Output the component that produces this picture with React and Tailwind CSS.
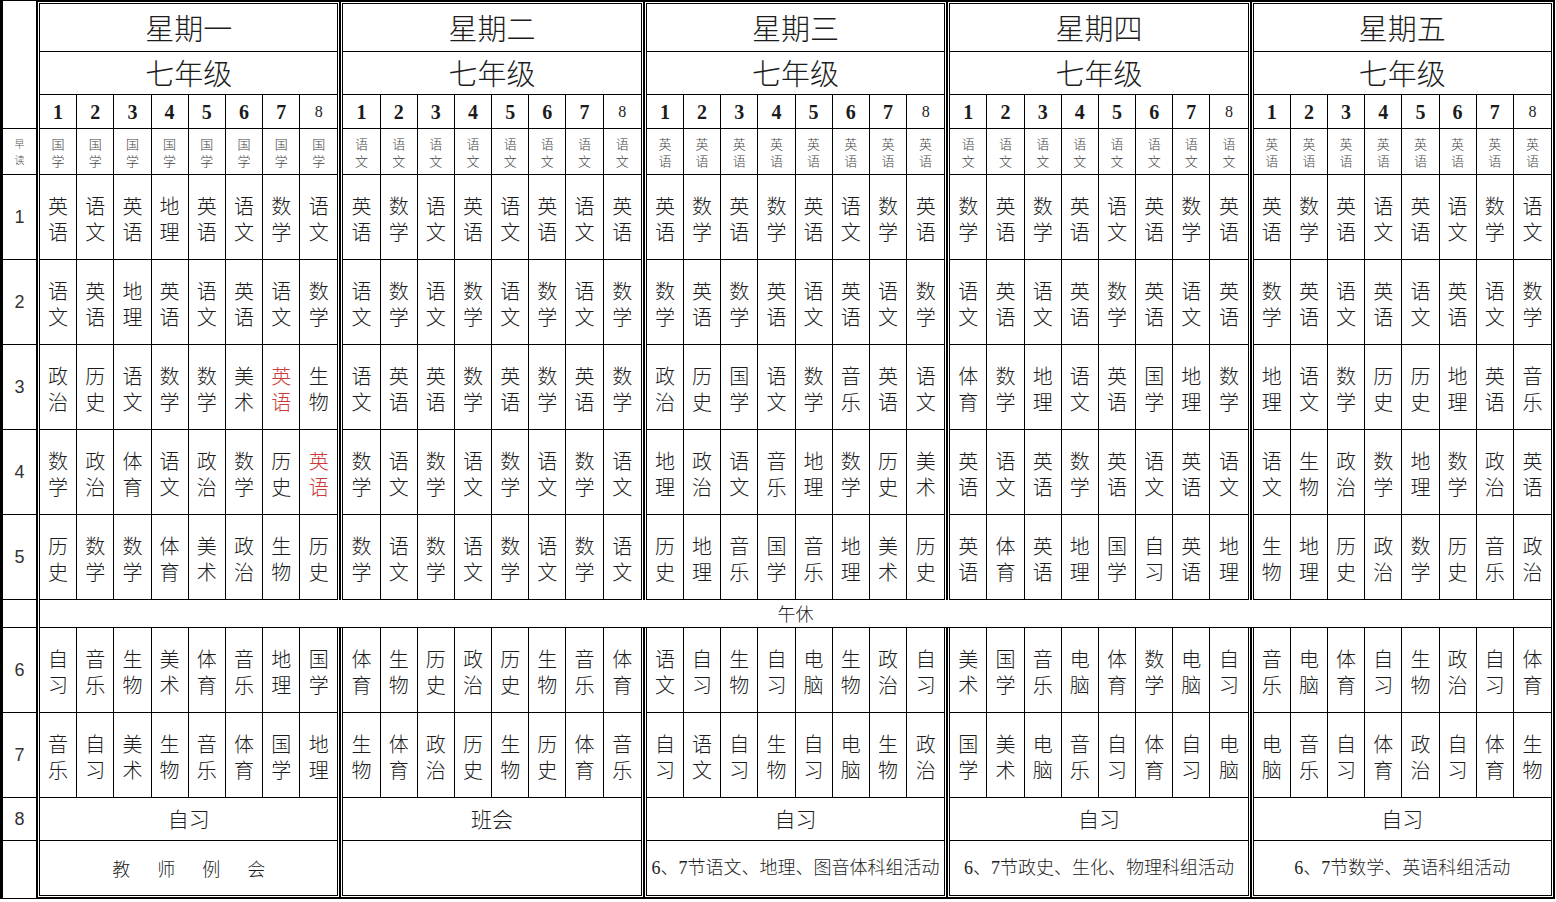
import React from 'react';

const days = ['星期一', '星期二', '星期三', '星期四', '星期五'];
const early = ['国学', '语文', '英语', '语文', '英语'];

// each period: 5 days, 8 classes; a leading * marks red text
const morning = [
  [
    '英语 语文 英语 地理 英语 语文 数学 语文',
    '英语 数学 语文 英语 语文 英语 语文 英语',
    '英语 数学 英语 数学 英语 语文 数学 英语',
    '数学 英语 数学 英语 语文 英语 数学 英语',
    '英语 数学 英语 语文 英语 语文 数学 语文',
  ],
  [
    '语文 英语 地理 英语 语文 英语 语文 数学',
    '语文 数学 语文 数学 语文 数学 语文 数学',
    '数学 英语 数学 英语 语文 英语 语文 数学',
    '语文 英语 语文 英语 数学 英语 语文 英语',
    '数学 英语 语文 英语 语文 英语 语文 数学',
  ],
  [
    '政治 历史 语文 数学 数学 美术 *英语 生物',
    '语文 英语 英语 数学 英语 数学 英语 数学',
    '政治 历史 国学 语文 数学 音乐 英语 语文',
    '体育 数学 地理 语文 英语 国学 地理 数学',
    '地理 语文 数学 历史 历史 地理 英语 音乐',
  ],
  [
    '数学 政治 体育 语文 政治 数学 历史 *英语',
    '数学 语文 数学 语文 数学 语文 数学 语文',
    '地理 政治 语文 音乐 地理 数学 历史 美术',
    '英语 语文 英语 数学 英语 语文 英语 语文',
    '语文 生物 政治 数学 地理 数学 政治 英语',
  ],
  [
    '历史 数学 数学 体育 美术 政治 生物 历史',
    '数学 语文 数学 语文 数学 语文 数学 语文',
    '历史 地理 音乐 国学 音乐 地理 美术 历史',
    '英语 体育 英语 地理 国学 自习 英语 地理',
    '生物 地理 历史 政治 数学 历史 音乐 政治',
  ],
];

const afternoon = [
  [
    '自习 音乐 生物 美术 体育 音乐 地理 国学',
    '体育 生物 历史 政治 历史 生物 音乐 体育',
    '语文 自习 生物 自习 电脑 生物 政治 自习',
    '美术 国学 音乐 电脑 体育 数学 电脑 自习',
    '音乐 电脑 体育 自习 生物 政治 自习 体育',
  ],
  [
    '音乐 自习 美术 生物 音乐 体育 国学 地理',
    '生物 体育 政治 历史 生物 历史 体育 音乐',
    '自习 语文 自习 生物 自习 电脑 生物 政治',
    '国学 美术 电脑 音乐 自习 体育 自习 电脑',
    '电脑 音乐 自习 体育 政治 自习 体育 生物',
  ],
];

const eighth = ['自习', '班会', '自习', '自习', '自习'];
const notes = [
  null,
  '',
  '6、7节语文、地理、图音体科组活动',
  '6、7节政史、生化、物理科组活动',
  '6、7节数学、英语科组活动',
];

const Subject = ({ name, small }) => {
  const red = name.startsWith('*');
  const text = red ? name.slice(1) : name;
  return (
    <div
      className={`flex flex-col items-center justify-center ${
        small ? 'text-[13px] leading-[17px] text-[#444]' : 'text-[20px] leading-[26px] pt-[3px]'
      } ${red ? 'text-[#cc3a3a]' : ''}`}
    >
      {text.split('').map((c, i) => (
        <span key={i}>{c}</span>
      ))}
    </div>
  );
};

const ClassRow = ({ list, h, small }) => (
  <div className={`${h} border-b border-black grid grid-cols-8`}>
    {list.map((s, i) => (
      <div key={i} className={`flex items-center justify-center ${i < 7 ? 'border-r border-black' : ''}`}>
        <Subject name={s} small={small} />
      </div>
    ))}
  </div>
);

const LeftNum = ({ n, h }) => (
  <div className={`${h} border-b border-black flex items-center justify-center font-['Liberation_Sans',sans-serif] text-[18px] text-[#333] font-light`}>
    {n}
  </div>
);

export default function App() {
  return (
    <div className="w-[1556px] h-[902px] bg-white text-[#1c1c1c] font-['Noto_Sans_CJK_SC',sans-serif] font-light overflow-hidden">
      {/* header + morning */}
      <div className="flex w-[1555px]">
        <div className="w-[36px] shrink-0 border-l-[3px] border-black flex flex-col">
          <div className="h-[129px] border-t border-b border-black" />
          <div className="h-[46px] border-b border-black flex flex-col items-center justify-center text-[10px] leading-[16px] text-[#555]">
            <span>早</span>
            <span>读</span>
          </div>
          {[1, 2, 3, 4, 5].map((n) => (
            <LeftNum key={n} n={n} h="h-[85px]" />
          ))}
        </div>
        {days.map((d, b) => (
          <div
            key={d}
            className={`flex-1 min-w-0 border-l-2 border-t-2 border-black pt-px px-px ${b === 4 ? 'border-r-2' : ''}`}
          >
            <div className="border-x border-t border-black">
              <div className="h-[48px] border-b border-black flex items-center justify-center text-[29px]">{d}</div>
              <div className="h-[43px] border-b border-black flex items-center justify-center text-[29px]">七年级</div>
              <div className="h-[34px] border-b border-black grid grid-cols-8 font-['Liberation_Serif',serif]">
                {[1, 2, 3, 4, 5, 6, 7, 8].map((n) => (
                  <div
                    key={n}
                    className={`flex items-center justify-center ${n < 8 ? 'border-r border-black text-[20px] font-bold' : 'text-[16px] font-normal'}`}
                  >
                    {n}
                  </div>
                ))}
              </div>
              <ClassRow list={Array(8).fill(early[b])} h="h-[46px]" small />
              {morning.map((p, i) => (
                <ClassRow key={i} list={p[b].split(' ')} h="h-[85px]" />
              ))}
            </div>
          </div>
        ))}
      </div>

      {/* lunch break */}
      <div className="flex w-[1555px] h-[28px]">
        <div className="w-[36px] shrink-0 border-l-[3px] border-b border-black" />
        <div className="flex-1 border-x-2 border-black px-px">
          <div className="h-full border-x border-b border-black flex items-center justify-center text-[18px]">午休</div>
        </div>
      </div>

      {/* afternoon */}
      <div className="flex w-[1555px]">
        <div className="w-[36px] shrink-0 border-l-[3px] border-black flex flex-col">
          <LeftNum n={6} h="h-[85px]" />
          <LeftNum n={7} h="h-[85px]" />
          <LeftNum n={8} h="h-[43px]" />
          <div className="h-[58px] border-b border-black" />
        </div>
        {days.map((d, b) => (
          <div
            key={d}
            className={`flex-1 min-w-0 border-l-2 border-b-2 border-black pb-px px-px ${b === 4 ? 'border-r-2' : ''}`}
          >
            <div className="border-x border-b border-black">
              {afternoon.map((p, i) => (
                <ClassRow key={i} list={p[b].split(' ')} h="h-[85px]" />
              ))}
              <div className="h-[43px] border-b border-black flex items-center justify-center text-[21px]">{eighth[b]}</div>
              <div className="h-[54px] flex items-center justify-center text-[18px] font-['Liberation_Serif','Noto_Sans_CJK_SC',serif]">
                {notes[b] === null ? (
                  <div className="flex gap-[27px] font-['Noto_Sans_CJK_SC',sans-serif]">
                    <span>教</span>
                    <span>师</span>
                    <span>例</span>
                    <span>会</span>
                  </div>
                ) : (
                  notes[b]
                )}
              </div>
            </div>
          </div>
        ))}
      </div>
    </div>
  );
}
